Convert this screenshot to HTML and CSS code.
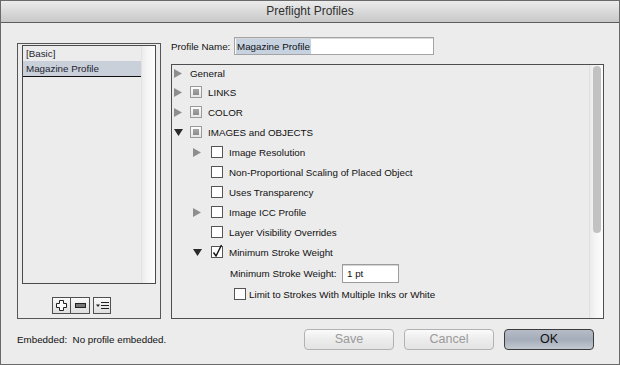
FILE: index.html
```html
<!DOCTYPE html>
<html>
<head>
    <meta charset="utf-8">
    <link rel="stylesheet" href="styles.css">
</head>
<body>
    <div class="window">
        <div class="titlebar">Preflight Profiles</div>

        <div class="content">
            <div class="left-col">
                <div class="profiles-box">
                    <div class="profiles-list">
                        <div class="list-items">
                            <div class="list-item">[Basic]</div>
                            <div class="list-item selected">Magazine Profile</div>
                        </div>
                        <div class="list-track"></div>
                    </div>
                    <div class="list-tools">
                        <div class="tool-btn">
                            <svg width="11" height="11" viewBox="0 0 11 11"><path d="M3.5 0.5h4v3h3v4h-3v3h-4v-3h-3v-4h3z" fill="#fff" stroke="#222" stroke-width="1"/></svg>
                        </div>
                        <div class="tool-btn">
                            <svg width="11" height="5" viewBox="0 0 11 5"><rect x="0.5" y="0.5" width="10" height="4" fill="#777" stroke="#222"/></svg>
                        </div>
                        <div class="tool-btn menu-btn">
                            <svg width="13" height="9" viewBox="0 0 13 9"><path d="M0 3.5h4l-2 2.5z" fill="#222"/><path d="M5 1.5h8M5 4.5h8M5 7.5h8" stroke="#222" stroke-width="1"/></svg>
                        </div>
                    </div>
                </div>
            </div>

            <div class="right-col">
                <div class="name-row">
                    <span class="label">Profile Name:</span>
                    <div class="name-input"><span class="sel-text">Magazine Profile</span></div>
                </div>

                <div class="tree">
                    <div class="tree-rows">
                        <div class="row row-first lvl1">
                            <span class="arrow"><svg width="8" height="9" viewBox="0 0 8 9"><path d="M0 0L8 4.5L0 9z" fill="#8e8e8e"/></svg></span>
                            <span class="text">General</span>
                        </div>
                        <div class="row lvl1">
                            <span class="arrow"><svg width="8" height="9" viewBox="0 0 8 9"><path d="M0 0L8 4.5L0 9z" fill="#8e8e8e"/></svg></span>
                            <span class="chk mixed"></span>
                            <span class="text">LINKS</span>
                        </div>
                        <div class="row lvl1">
                            <span class="arrow"><svg width="8" height="9" viewBox="0 0 8 9"><path d="M0 0L8 4.5L0 9z" fill="#8e8e8e"/></svg></span>
                            <span class="chk mixed"></span>
                            <span class="text">COLOR</span>
                        </div>
                        <div class="row lvl1">
                            <span class="arrow"><svg width="9" height="7" viewBox="0 0 9 7"><path d="M0 0L9 0L4.5 7z" fill="#2a2a2a"/></svg></span>
                            <span class="chk mixed"></span>
                            <span class="text">IMAGES and OBJECTS</span>
                        </div>
                        <div class="row lvl2">
                            <span class="arrow"><svg width="8" height="9" viewBox="0 0 8 9"><path d="M0 0L8 4.5L0 9z" fill="#8e8e8e"/></svg></span>
                            <span class="chk"></span>
                            <span class="text">Image Resolution</span>
                        </div>
                        <div class="row lvl2">
                            <span class="arrow"></span>
                            <span class="chk"></span>
                            <span class="text">Non-Proportional Scaling of Placed Object</span>
                        </div>
                        <div class="row lvl2">
                            <span class="arrow"></span>
                            <span class="chk"></span>
                            <span class="text">Uses Transparency</span>
                        </div>
                        <div class="row lvl2">
                            <span class="arrow"><svg width="8" height="9" viewBox="0 0 8 9"><path d="M0 0L8 4.5L0 9z" fill="#8e8e8e"/></svg></span>
                            <span class="chk"></span>
                            <span class="text">Image ICC Profile</span>
                        </div>
                        <div class="row lvl2">
                            <span class="arrow"></span>
                            <span class="chk"></span>
                            <span class="text">Layer Visibility Overrides</span>
                        </div>
                        <div class="row lvl2">
                            <span class="arrow"><svg width="9" height="7" viewBox="0 0 9 7"><path d="M0 0L9 0L4.5 7z" fill="#2a2a2a"/></svg></span>
                            <span class="chk checked"><svg width="12" height="14" viewBox="0 0 12 14"><path d="M2.5 8.5L5 12L10.5 1" fill="none" stroke="#111" stroke-width="1.4"/></svg></span>
                            <span class="text">Minimum Stroke Weight</span>
                        </div>
                        <div class="row row-field">
                            <span class="label">Minimum Stroke Weight:</span>
                            <div class="field-input">1 pt</div>
                        </div>
                        <div class="row row-limit">
                            <span class="chk"></span>
                            <span class="text">Limit to Strokes With Multiple Inks or White</span>
                        </div>
                    </div>
                    <div class="tree-track"><div class="thumb"></div></div>
                </div>
            </div>
        </div>

        <div class="footer">
            <span class="embedded">Embedded:&nbsp; No profile embedded.</span>
            <div class="buttons">
                <div class="btn disabled">Save</div>
                <div class="btn disabled">Cancel</div>
                <div class="btn default">OK</div>
            </div>
        </div>
    </div>
</body>
</html>
```

FILE: styles.css
```css
* {
    margin: 0;
    padding: 0;
    box-sizing: border-box;
}

body {
    width: 620px;
    height: 365px;
    overflow: hidden;
    background: #ececec;
    font-family: "Liberation Sans", Arial, sans-serif;
    font-size: 9.8px;
    color: #111;
}

.window {
    width: 620px;
    height: 365px;
    border: 1px solid #6a6a6a;
    background: #ececec;
    display: flex;
    flex-direction: column;
}

.titlebar {
    height: 22px;
    border-bottom: 1px solid #5c5c5c;
    background: linear-gradient(#ececec, #d6d6d6 60%, #c8c8c8);
    text-align: center;
    font-size: 12px;
    line-height: 21px;
    color: #303030;
}

.content {
    display: flex;
    gap: 10px;
    padding: 14px 15px 0 16px;
}

/* left side: profile list */

.left-col {
    width: 144px;
    padding-top: 6px;
}

.profiles-box {
    height: 276px;
    border: 1px solid #565656;
    padding: 1px 4px 0 4px;
}

.profiles-list {
    height: 239px;
    border: 1px solid #4a4a4a;
    display: flex;
    background: #ececec;
}

.list-items {
    flex: 1;
}

.list-item {
    height: 15px;
    line-height: 15px;
    padding-left: 3px;
    color: #1e2430;
}

.list-item.selected {
    height: 16px;
    background: #c9d0da;
    border-bottom: 1px solid #111;
}

.list-track {
    width: 14px;
    border-left: 1px solid #e2e2e2;
    background: linear-gradient(to right, #ececec, #f7f7f7 50%, #fdfdfd);
}

.list-tools {
    display: flex;
    padding: 13px 0 0 30px;
}

.tool-btn {
    width: 19px;
    height: 17px;
    border: 1px solid #505050;
    background: linear-gradient(#fafafa, #dedede);
    display: flex;
    align-items: center;
    justify-content: center;
}

.tool-btn + .tool-btn {
    margin-left: -1px;
    width: 20px;
}

.tool-btn.menu-btn {
    margin-left: 3px;
    width: 18px;
}

/* right side: profile tree */

.right-col {
    width: 433px;
}

.name-row {
    display: flex;
    align-items: center;
    gap: 6px;
    height: 18px;
}

.name-row .label {
    width: 57px;
    white-space: nowrap;
}

.name-input {
    width: 200px;
    height: 18px;
    border: 1px solid #a4a4a4;
    box-shadow: inset 0 1px 0 #d8d8d8;
    background: #fff;
    padding: 1px 1px 0 1px;
    line-height: 15px;
}

.sel-text {
    display: inline-block;
    background: #c6d2e0;
    padding: 0 1px;
}

.tree {
    margin-top: 9px;
    height: 255px;
    border: 1px solid #4e4e4e;
    display: flex;
}

.tree-rows {
    flex: 1;
}

.row {
    height: 20px;
    display: flex;
    align-items: center;
}

.row-first {
    height: 17px;
}

.lvl1 {
    padding-left: 2px;
}

.lvl1 .arrow {
    width: 16px;
}

.lvl2 {
    padding-left: 21px;
}

.lvl2 .arrow {
    width: 18px;
}

.arrow {
    display: flex;
    align-items: center;
    height: 100%;
}

.chk {
    width: 12px;
    height: 12px;
    border: 1px solid #555;
    background: #fff;
    margin-right: 6px;
    position: relative;
}

.chk.mixed {
    border-color: #9a9a9a;
    background: linear-gradient(#fdfdfd, #e6e6e6);
}

.chk.mixed::after {
    content: "";
    position: absolute;
    left: 2px;
    top: 2px;
    width: 6px;
    height: 6px;
    background: linear-gradient(#a6a6a6, #8c8c8c);
}

.chk.checked svg {
    position: absolute;
    left: -1px;
    top: -3px;
}

.row-field {
    height: 22px;
    padding-left: 58px;
    gap: 6px;
}

.row-field .label {
    width: 106px;
    white-space: nowrap;
}

.field-input {
    width: 57px;
    height: 19px;
    border: 1px solid #9c9c9c;
    box-shadow: inset 0 1px 0 #d4d4d4;
    background: #fff;
    padding-left: 4px;
    line-height: 17px;
}

.row-limit {
    padding-left: 62px;
}

.row-limit .chk {
    margin-right: 3px;
}

.tree-track {
    width: 14px;
    border-left: 1px solid #e0e0e0;
    background: linear-gradient(to right, #ececec, #f6f6f6 50%, #fcfcfc);
    padding: 1px 0 0 3px;
}

.thumb {
    width: 8px;
    height: 167px;
    border-radius: 4px;
    background: #c2c2c2;
}

/* footer */

.footer {
    display: flex;
    justify-content: space-between;
    padding: 10px 25px 0 16px;
}

.embedded {
    line-height: 21px;
}

.buttons {
    display: flex;
    gap: 10px;
}

.btn {
    width: 90px;
    height: 21px;
    border: 1px solid #b2b2b2;
    border-radius: 4px;
    background: linear-gradient(#fbfbfb, #ececec 50%, #e4e4e4);
    text-align: center;
    font-size: 12.5px;
    line-height: 19px;
}

.btn.disabled {
    color: #9a9a9a;
}

.btn.default {
    border-color: #3c3c3c;
    background: linear-gradient(#b6bcc7, #a5adba 50%, #c2c8d0);
    color: #111;
}
```
